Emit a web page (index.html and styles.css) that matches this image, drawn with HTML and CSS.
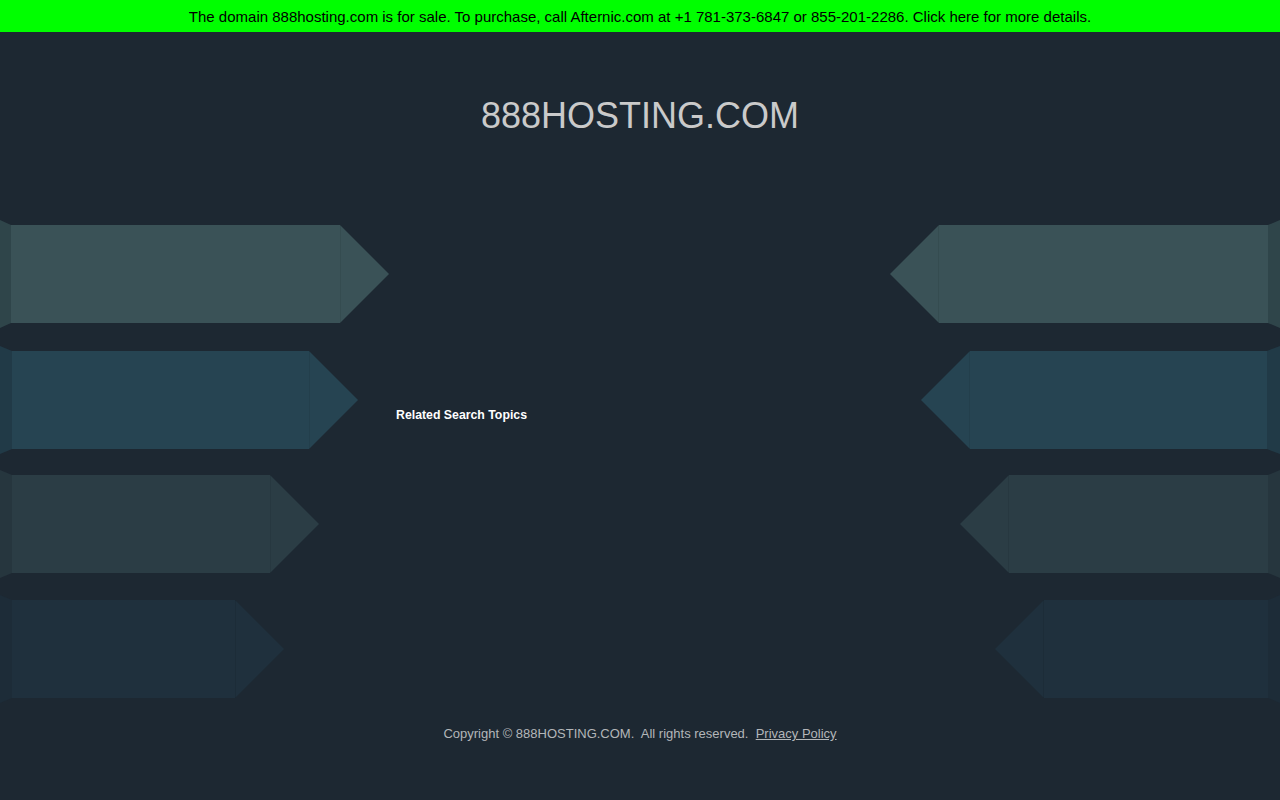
FILE: index.html
```html
<!DOCTYPE html>
<html lang="en">
<head>
<meta charset="utf-8">
<title>888hosting.com</title>
<link rel="stylesheet" href="styles.css">
</head>
<body>
<div class="topbar">The domain 888hosting.com is for sale. To purchase, call Afternic.com at +1 781-373-6847 or 855-201-2286. Click here for more details.</div>
<header class="header"><h1 class="title">888HOSTING.COM</h1></header>
<main class="stage">
  <div class="arrows left">
    <svg class="arrow a1" width="389" height="108" viewBox="0 0 389 108"><polygon class="side" points="0,0 11,5 11,103 0,108"/><polygon class="body" points="11,5 340,5 389,54 340,103 11,103"/><line class="seam" x1="340.5" y1="5" x2="340.5" y2="103"/></svg>
    <svg class="arrow a2" width="358" height="108" viewBox="0 0 358 108"><polygon class="side" points="0,0 12,5 12,103 0,108"/><polygon class="body" points="12,5 309,5 358,54 309,103 12,103"/><line class="seam" x1="309.5" y1="5" x2="309.5" y2="103"/></svg>
    <svg class="arrow a3" width="319" height="108" viewBox="0 0 319 108"><polygon class="side" points="0,0 12,5 12,103 0,108"/><polygon class="body" points="12,5 270,5 319,54 270,103 12,103"/><line class="seam" x1="270.5" y1="5" x2="270.5" y2="103"/></svg>
    <svg class="arrow a4" width="284" height="108" viewBox="0 0 284 108"><polygon class="side" points="0,0 12,5 12,103 0,108"/><polygon class="body" points="12,5 235,5 284,54 235,103 12,103"/><line class="seam" x1="235.5" y1="5" x2="235.5" y2="103"/></svg>
  </div>
  <section class="center">
    <h2 class="related">Related Search Topics</h2>
  </section>
  <div class="arrows right">
    <svg class="arrow a1 flip" width="390" height="108" viewBox="0 0 390 108"><polygon class="side" points="0,0 12,5 12,103 0,108"/><polygon class="body" points="12,5 341,5 390,54 341,103 12,103"/><line class="seam" x1="341.5" y1="5" x2="341.5" y2="103"/></svg>
    <svg class="arrow a2 flip" width="359" height="108" viewBox="0 0 359 108"><polygon class="side" points="0,0 13,5 13,103 0,108"/><polygon class="body" points="13,5 310,5 359,54 310,103 13,103"/><line class="seam" x1="310.5" y1="5" x2="310.5" y2="103"/></svg>
    <svg class="arrow a3 flip" width="320" height="108" viewBox="0 0 320 108"><polygon class="side" points="0,0 12,5 12,103 0,108"/><polygon class="body" points="12,5 271,5 320,54 271,103 12,103"/><line class="seam" x1="271.5" y1="5" x2="271.5" y2="103"/></svg>
    <svg class="arrow a4 flip" width="285" height="108" viewBox="0 0 285 108"><polygon class="side" points="0,0 12,5 12,103 0,108"/><polygon class="body" points="12,5 236,5 285,54 236,103 12,103"/><line class="seam" x1="236.5" y1="5" x2="236.5" y2="103"/></svg>
  </div>
</main>
<footer class="footer">Copyright © 888HOSTING.COM.&nbsp; All rights reserved.&nbsp; <a class="privacy" href="#">Privacy Policy</a></footer>
</body>
</html>
```

FILE: styles.css
```css
* { box-sizing: border-box; }
html, body { margin: 0; padding: 0; }
body {
  background: #1d2832;
  font-family: "Liberation Sans", Arial, sans-serif;
  height: 800px;
  overflow: hidden;
}
.topbar {
  background: #00ff00;
  color: #000;
  height: 32px;
  font-size: 15px;
  line-height: 34px;
  text-align: center;
}
.header {
  height: 188px;
  padding-top: 63px;
  text-align: center;
}
.title {
  margin: 0;
  font-weight: normal;
  font-size: 36px;
  line-height: 42px;
  color: #cacaca;
}
.stage {
  display: grid;
  grid-template-columns: 390px 1fr 390px;
  height: 483px;
}
.arrows {
  display: flex;
  flex-direction: column;
  gap: 16px;
}
.arrows .a2 { margin-top: 2px; }
.arrows .a4 { margin-top: 1px; }
.arrows.right { align-items: flex-end; }
.arrow { display: block; flex: none; }
.flip { transform: scaleX(-1); }
.seam { stroke: rgba(0, 0, 0, 0.07); stroke-width: 1; }
.a1 .body { fill: #3a5257; }
.a1 .side { fill: #2f454a; }
.a2 .body { fill: #264452; }
.a2 .side { fill: #213a47; }
.a3 .body { fill: #2b3d45; }
.a3 .side { fill: #26363e; }
.a4 .body { fill: #1f303d; }
.a4 .side { fill: #1d2c38; }
.center {
  padding: 187px 0 0 6px;
}
.related {
  margin: 0;
  color: #ffffff;
  font-size: 12.3px;
  font-weight: bold;
  line-height: 16px;
}
.footer {
  padding-top: 23px;
  text-align: center;
  color: #b3b6b9;
  font-size: 13px;
  line-height: 16px;
}
.privacy {
  color: #b3b6b9;
  text-decoration: underline;
}
```
